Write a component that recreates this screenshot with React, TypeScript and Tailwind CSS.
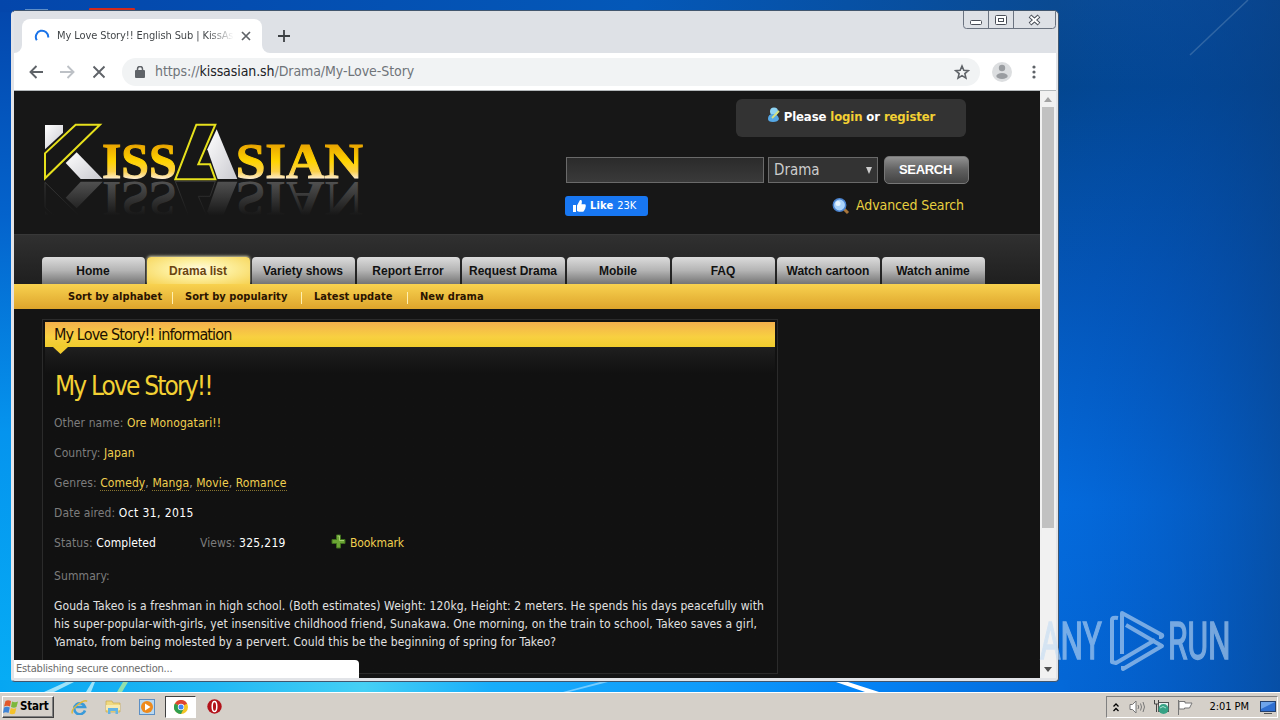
import type { ReactNode } from "react";

const navItems = ["Home", "Drama list", "Variety shows", "Report Error", "Request Drama", "Mobile", "FAQ", "Watch cartoon", "Watch anime"];

const genres = ["Comedy", "Manga", "Movie", "Romance"];

const summary = [
  "Gouda Takeo is a freshman in high school. (Both estimates) Weight: 120kg, Height: 2 meters. He spends his days peacefully with",
  "his super-popular-with-girls, yet insensitive childhood friend, Sunakawa. One morning, on the train to school, Takeo saves a girl,",
  "Yamato, from being molested by a pervert. Could this be the beginning of spring for Takeo?",
];

function Wallpaper() {
  return (
    <svg className="absolute inset-0" width="1280" height="720" viewBox="0 0 1280 720">
      <defs>
        <linearGradient id="left" x1="0" y1="0" x2="0" y2="1">
          <stop offset="0" stopColor="#0446ab" />
          <stop offset="0.3" stopColor="#0463cc" />
          <stop offset="0.6" stopColor="#0594ee" />
          <stop offset="1" stopColor="#06b0f6" />
        </linearGradient>
        <linearGradient id="right" x1="0" y1="0" x2="0" y2="1">
          <stop offset="0" stopColor="#0a4a92" />
          <stop offset="0.12" stopColor="#03468f" />
          <stop offset="0.4" stopColor="#0456b8" />
          <stop offset="0.7" stopColor="#046bdd" />
          <stop offset="1" stopColor="#0466d4" />
        </linearGradient>
        <linearGradient id="shade" x1="0" y1="0" x2="1" y2="0">
          <stop offset="0" stopColor="#0050c0" stopOpacity="0" />
          <stop offset="1" stopColor="#083f86" stopOpacity="0.6" />
        </linearGradient>
        <linearGradient id="floor" x1="0" y1="0" x2="1" y2="0">
          <stop offset="0" stopColor="#06a6f2" />
          <stop offset="0.2" stopColor="#22b8f4" />
          <stop offset="0.34" stopColor="#45d0f5" />
          <stop offset="0.46" stopColor="#18adfb" />
          <stop offset="0.66" stopColor="#109bfb" />
          <stop offset="0.8" stopColor="#0484f6" />
          <stop offset="1" stopColor="#0468d8" />
        </linearGradient>
        <linearGradient id="ceiling" x1="0" y1="0" x2="1" y2="0">
          <stop offset="0" stopColor="#0446ab" />
          <stop offset="0.6" stopColor="#0458b8" />
          <stop offset="1" stopColor="#0a4a92" />
        </linearGradient>
      </defs>
      <rect width="1280" height="720" fill="url(#left)" />
      <rect x="640" width="640" height="720" fill="url(#right)" />
      <rect x="1050" width="230" height="720" fill="url(#shade)" />
      <rect width="1059" height="12" fill="url(#ceiling)" />
      <rect y="680" width="1070" height="14" fill="url(#floor)" />
      <path d="M44 692 66 682h8L54 692zM86 692l6-10h3l-4 10z" fill="#b8ecfa" opacity=".85" />
      <path d="M117 692l6-10h5l-6 10z" fill="#a8e8a0" opacity=".85" />
      <path d="M563 692 600 682h8L569 692z" fill="#8fd6ff" opacity=".8" />
      <path d="M836 682h12L879 692H865z" fill="#fff" />
      <path d="M1190 55 1248 0" stroke="#4b7bb0" strokeWidth="1.5" opacity=".6" />
      <rect x="89" y="8" width="46" height="4" rx="1" fill="#d42a1c" />
      <rect x="25" y="9" width="23" height="2" fill="#5f8fc8" />
    </svg>
  );
}

function Logo() {
  return (
    <svg width="350" height="130" viewBox="0 0 1050 390">
      <defs>
        <linearGradient id="gold" x1="0" y1="0" x2="0" y2="1">
          <stop offset="0.2" stopColor="#e9a400" />
          <stop offset="0.5" stopColor="#ffd400" />
          <stop offset="0.68" stopColor="#fbd04a" />
          <stop offset="0.82" stopColor="#fff0dc" />
        </linearGradient>
        <linearGradient id="silver" x1="0" y1="0" x2="1" y2="1">
          <stop offset="0" stopColor="#ffffff" />
          <stop offset="1" stopColor="#c9c9cf" />
        </linearGradient>
        <linearGradient id="fade" x1="0" y1="0" x2="0" y2="1">
          <stop offset="0" stopColor="#171717" stopOpacity="0.62" />
          <stop offset="0.7" stopColor="#171717" stopOpacity="1" />
        </linearGradient>
        <g id="shapes">
          <path d="M45 75H99V98L45 148Z" />
          <path d="M140 157 218 237H152L107 189Z" />
          <path d="M560 88 622 237H563L532 148Z" />
        </g>
        <g id="letters" fontFamily="Liberation Serif, serif" fontWeight="700" fontSize="153" strokeWidth="3">
          <text x="216" y="235" textLength="224" lengthAdjust="spacingAndGlyphs">ISS</text>
          <text x="617" y="235" textLength="382" lengthAdjust="spacingAndGlyphs">SIAN</text>
        </g>
      </defs>
      <g transform="translate(0 482) scale(1 -1)" fill="#b4b4b4">
        <use href="#shapes" />
        <use href="#letters" />
        <path d="M137 74H210L45 235V160Z M499 74H556L505 193H540L556 238H436Z" fill="#171717" stroke="#777" strokeWidth="3" />
      </g>
      <rect x="0" y="242" width="1050" height="148" fill="url(#fade)" />
      <use href="#shapes" fill="url(#silver)" />
      <use href="#letters" fill="url(#gold)" stroke="url(#gold)" />
      <g fill="#171717" stroke="#e6e01c" strokeWidth="6">
        <path d="M137 74H210L45 235V160Z" />
        <path d="M499 74H556L505 193H540L556 238H436Z" />
      </g>
    </svg>
  );
}

function WindowButtons() {
  return (
    <svg className="absolute right-0 top-0" width="94" height="18" viewBox="0 0 94 18" fill="none" stroke="#6b7380">
      <path d="M1.5 0V14.5Q1.5 17.5 4.500 17.500H90.500Q93.500 17.500 93.500 14.500V0M26.500 0V17M51.500 0V17" />
      <rect x="8.500" y="9.500" width="11" height="4" rx="1" fill="#fff" stroke="#4a4f58" />
      <rect x="33.500" y="4.500" width="11" height="9" rx="1" fill="#fff" stroke="#4a4f58" />
      <rect x="36.500" y="7.500" width="5" height="3" stroke="#4a4f58" />
      <path d="M68 5 77 13M77 5 68 13" stroke="#4a4f58" strokeWidth="4" />
      <path d="M68.500 5.500 76.500 12.500M76.500 5.500 68.500 12.500" stroke="#fff" strokeWidth="2" />
    </svg>
  );
}

function TabStrip() {
  return (
    <div className="relative flex h-[42px] shrink-0 bg-[#dee1e6]">
      <div className="mt-2 flex w-2 items-end bg-white">
        <div className="h-[34px] w-2 rounded-br-lg bg-[#dee1e6]" />
      </div>
      <div className="mt-2 flex h-[34px] w-[240px] items-center rounded-t-lg bg-white pl-[12px]">
        <svg width="16" height="16" viewBox="0 0 16 16" fill="none" stroke="#1a73e8" strokeWidth="2">
          <path d="M2.800 12.200A6.200 6.200 0 1 1 14.200 9.500" />
        </svg>
        <div className="ml-[7px] w-[177px] overflow-hidden whitespace-nowrap bg-linear-to-r from-[#3c4043] from-85% to-transparent to-100% bg-clip-text text-[11px] tracking-[-0.1px] text-transparent">
          My Love Story!! English Sub | KissAsi
        </div>
        <svg className="ml-[7px]" width="10" height="10" viewBox="0 0 10 10" stroke="#5f6368" strokeWidth="1.700">
          <path d="M1 1 9 9M9 1 1 9" />
        </svg>
      </div>
      <div className="mt-2 w-2 bg-white">
        <div className="h-[34px] w-2 rounded-bl-lg bg-[#dee1e6]" />
      </div>
      <svg className="ml-[8px] mt-[19px]" width="12" height="12" viewBox="0 0 12 12" stroke="#3c4043" strokeWidth="1.800">
        <path d="M6 0V12M0 6H12" />
      </svg>
      <WindowButtons />
    </div>
  );
}

function Toolbar() {
  return (
    <div className="flex h-[38px] shrink-0 items-center border-b border-[#b4b8ba] bg-white pl-[15px]">
      <svg width="78" height="14" viewBox="0 0 78 14" fill="none" strokeWidth="1.900">
        <path d="M14 7H1.500M7.500 1 1.500 7 7.500 13" stroke="#5f6368" />
        <path d="M31 7H44.500M38.500 1 44.500 7 38.500 13" stroke="#bdc1c6" />
        <path d="M64.500 1.500 75.500 12.500M75.500 1.500 64.500 12.500" stroke="#5f6368" />
      </svg>
      <div className="ml-[15px] flex h-7 w-[858px] items-center rounded-full bg-[#f1f3f4] pl-[13px] pr-[10px]">
        <svg width="10" height="12" viewBox="0 0 10 12" fill="none">
          <rect y="4" width="10" height="8" rx="1" fill="#5f6368" />
          <path d="M2.500 5V3a2.500 2.500 0 0 1 5 0V5" stroke="#5f6368" strokeWidth="1.500" />
        </svg>
        <span className="ml-[10px] text-[14px] tracking-[-0.08px] text-[#6f7479]">
          https://<span className="text-[#202124]">kissasian.sh</span>/Drama/My-Love-Story
        </span>
        <svg className="ml-auto" width="16" height="16" viewBox="0 0 24 24" fill="none" stroke="#5f6368" strokeWidth="2.400">
          <path d="M12 3l2.700 6.300 6.800.6-5.200 4.500 1.600 6.700L12 17.500l-5.900 3.600 1.600-6.700L2.500 9.900l6.800-.6z" />
        </svg>
      </div>
      <svg className="ml-[12px]" width="20" height="20" viewBox="0 0 20 20">
        <circle cx="10" cy="10" r="10" fill="#dcdee0" />
        <circle cx="10" cy="6" r="3.200" fill="#9a9da1" />
        <ellipse cx="10" cy="14" rx="5.700" ry="3" fill="#9a9da1" />
      </svg>
      <svg className="ml-[20px]" width="4" height="14" viewBox="0 0 4 14" fill="#5f6368">
        <circle cx="2" cy="2" r="1.600" />
        <circle cx="2" cy="7" r="1.600" />
        <circle cx="2" cy="12" r="1.600" />
      </svg>
    </div>
  );
}

function Header() {
  return (
    <div className="flex h-[143px] shrink-0 bg-[#171717]">
      <div className="ml-4 mt-[9px] w-[350px]">
        <Logo />
      </div>
      <div className="ml-[185px] w-[405px] pt-2">
        <div className="ml-[171px] flex h-[38px] w-[230px] justify-center rounded-md bg-[#333] pt-[8px] text-[13px] font-bold leading-[19px] tracking-[-0.12px] text-white">
          <svg className="mr-[4px]" width="13" height="16" viewBox="0 0 13 16">
            <circle cx="7" cy="4.500" r="4" fill="#8fd4f4" />
            <path d="M1 12q0-5 5-5t6 5q-1 3-6 3t-5-3z" fill="#55a8e6" />
            <path d="M5 11 12 4" stroke="#d8e07c" strokeWidth="1.800" />
          </svg>
          <span className="whitespace-pre">Please <a className="text-[#f3d034]">login</a> or <a className="text-[#f3d034]">register</a></span>
        </div>
        <div className="mt-[19px] flex items-start">
          <div className="ml-[1px] mt-px h-[26px] w-[198px] border border-[#6a6a6a] bg-linear-to-b from-[#2b2b2b] to-[#3a3a3a]" />
          <div className="ml-1 mt-px flex h-[26px] w-[110px] items-center border border-[#6a6a6a] bg-[#333] pl-[5px] pt-px text-[15px] text-[#ccc]">
            Drama
            <svg className="ml-auto mr-[5px]" width="6" height="7" viewBox="0 0 6 7" fill="#ccc"><path d="M0 0H6L3 7Z" /></svg>
          </div>
          <div className="ml-[6px] flex h-[28px] w-[85px] items-center justify-center rounded-[5px] border border-[#777] bg-linear-to-b from-[#929292] via-[#606060] via-50% to-[#434343] pr-[2px] font-[Liberation_Sans,sans-serif] text-[13px] font-bold tracking-[-0.3px] text-white">
            SEARCH
          </div>
        </div>
        <div className="mt-[12px] flex items-start">
          <div className="flex h-5 w-[83px] items-center rounded-[3px] bg-[#1877f2] pl-2 text-[11px] text-white">
            <svg width="13" height="12" viewBox="0 0 13 12" fill="#fff">
              <path d="M0 5H3V12H0zM4 5.500 7 0h1.200q1.200 1 .3 4.200H12q1.300.6.600 1.800.4 1-.3 1.700.2 1-.5 1.600 0 1-.7 1.300-.2 1.200-1.500 1.200H6L4 11z" />
            </svg>
            <b className="ml-[4px] tracking-[0.15px]">Like</b>
            <span className="ml-[4px] tracking-[-0.1px]">23K</span>
          </div>
          <svg className="ml-[184px] mt-px" width="18" height="18" viewBox="0 0 18 18">
            <path d="M11 11 16 16" stroke="#a8753a" strokeWidth="3" />
            <circle cx="7.500" cy="8" r="6.200" fill="#a9d3fa" stroke="#4a83cf" strokeWidth="1.500" />
            <circle cx="6" cy="6.500" r="2.500" fill="#e4f3ff" />
          </svg>
          <a className="ml-[6px] whitespace-nowrap text-[14px] leading-[18px] tracking-[-0.1px] text-[#e8d040]">Advanced Search</a>
        </div>
      </div>
    </div>
  );
}

function Nav() {
  return (
    <>
      <div className="flex h-[50px] shrink-0 items-end gap-[2px] border-t border-[#383838] bg-linear-to-b from-[#303030] to-[#1f1f1f] pl-7 font-[Liberation_Sans,sans-serif] text-[12px] font-bold">
        {navItems.map((item) =>
          item === "Drama list" ? (
            <a key={item} className="flex h-[27px] w-[103px] items-center justify-center whitespace-nowrap rounded-t-[4px] bg-radial-[at_50%_45%] from-[#fffbe0] via-[#fdf0a0] via-40% to-[#f6d252] pr-px text-[#6a4410] shadow-[0_-1px_3px_#cfcba8]">{item}</a>
          ) : (
            <a key={item} className="flex h-[27px] w-[103px] items-center justify-center whitespace-nowrap rounded-t-[4px] bg-linear-to-b from-[#dcdcdc] via-[#b4b4b4] via-50% to-[#757575] pr-px text-[#111]">{item}</a>
          )
        )}
      </div>
      <div className="flex h-[25px] shrink-0 items-center bg-linear-to-b from-[#f8d24f] to-[#dda42b] pl-[54px] pt-[2px] text-[11px] font-bold tracking-[0.05px] text-[#2a1400]">
        <a className="w-[104px]">Sort by alphabet</a>
        <i className="mr-[12px] h-3 w-px bg-[#fff0b0]" />
        <a className="w-[116px]">Sort by popularity</a>
        <i className="mr-[12px] h-3 w-px bg-[#fff0b0]" />
        <a className="w-[93px]">Latest update</a>
        <i className="mr-[12px] h-3 w-px bg-[#fff0b0]" />
        <a>New drama</a>
      </div>
    </>
  );
}

function Row({ label, children }: { label: string; children?: ReactNode }) {
  return (
    <div className="h-[30px] whitespace-pre leading-[18px]">
      <span className="text-[#7d7d7d]">{label}</span> {children}
    </div>
  );
}

function Info() {
  return (
    <div className="ml-[28px] mt-[10px] flex h-[355px] w-[736px] shrink-0 flex-col border border-[#2b2b2b] bg-[#111] p-[2px]">
      <div className="h-[25px] w-[730px] bg-linear-to-b from-[#f3b04c] via-[#f8d040] via-60% to-[#f0cc2c] pl-[9px] text-[16px] leading-[25px] tracking-[-0.88px] text-[#1d1000]">
        My Love Story!! information
      </div>
      <div className="flex-1 bg-linear-to-b from-[#1f1f1f] to-[#111] to-[26px] pl-[9px] text-[12px] tracking-[0.1px] text-[#f0d050]">
        <svg className="-ml-px" width="16" height="7" viewBox="0 0 16 7" fill="#f3cc30"><path d="M0 0H15L7.500 7Z" /></svg>
        <h2 className="mt-[14px] ml-[1px] h-[36px] whitespace-nowrap text-[26px] leading-[36px] tracking-[-1.85px] text-[#f3d034]">My Love Story!!</h2>
        <div className="mt-[10px]">
          <Row label="Other name:">Ore Monogatari!!</Row>
          <Row label="Country:">Japan</Row>
          <Row label="Genres:">
            {genres.map((g, i) => (
              <span key={g} className="text-[#999]">
                {i > 0 && ", "}
                <a className="border-b border-dotted border-[#8a7630] text-[#f0d050]">{g}</a>
              </span>
            ))}
          </Row>
          <Row label="Date aired:"><span className="tracking-[0.4px] text-white">Oct 31, 2015</span></Row>
          <div className="flex h-[33px]">
            <div className="w-[146px]"><Row label="Status:"><span className="text-white">Completed</span></Row></div>
            <div className="w-[131px]"><Row label="Views:"><span className="tracking-[0.3px] text-white">325,219</span></Row></div>
            <svg className="mr-[4px]" width="15" height="15" viewBox="0 0 15 15">
              <path d="M5.500 1H9.500V5.500H14V9.500H9.500V14H5.500V9.500H1V5.500H5.500Z" fill="#6ba534" stroke="#3f6e1c" />
              <path d="M6.500 2H8.500V6.500H13" stroke="#a5d070" fill="none" />
            </svg>
            <a className="leading-[18px] tracking-[-0.1px]">Bookmark</a>
          </div>
          <Row label="Summary:" />
          <div className="whitespace-nowrap leading-[18px] text-[#e2e2e2]">
            {summary.map((line) => <p key={line}>{line}</p>)}
          </div>
        </div>
      </div>
    </div>
  );
}

function Scrollbar() {
  return (
    <div className="flex w-4 flex-col items-center bg-[#f1f1f1] pt-[6px] pb-[6px]">
      <svg width="8" height="5" viewBox="0 0 8 5" fill="#a3a3a3"><path d="M0 5 4 0 8 5Z" /></svg>
      <div className="mt-[5px] h-[421px] w-[12px] bg-[#c1c1c1]" />
      <svg className="mt-auto" width="8" height="5" viewBox="0 0 8 5" fill="#505050"><path d="M0 0 4 5 8 0Z" /></svg>
    </div>
  );
}

function Browser() {
  return (
    <div className="relative ml-[11px] mt-[10px] flex h-[672px] w-[1048px] flex-col overflow-hidden rounded-t-[5px] rounded-b-[4px] border border-[#41566e] border-l-[#e4e4e8] bg-[#e2e4e8] pr-[2px] pl-[2px]">
      <TabStrip />
      <Toolbar />
      <div className="flex h-[587px] shrink-0">
        <div className="relative flex w-[1026px] flex-col overflow-hidden bg-[#141414]">
          <Header />
          <Nav />
          <Info />
          <div className="absolute bottom-0 left-0 h-[18px] w-[345px] rounded-tr bg-white pl-[2px] text-[11px] leading-[18px] tracking-[-0.2px] text-[#6b6b6b]">
            Establishing secure connection...
          </div>
        </div>
        <Scrollbar />
      </div>
    </div>
  );
}

function Watermark() {
  return (
    <svg className="absolute left-[1036px] top-[606px]" width="200" height="70" viewBox="0 0 200 70" opacity=".6">
      <g fill="#c4dcf4" stroke="#c4dcf4" strokeWidth="1.500" fontFamily="Roboto, sans-serif" fontSize="51">
        <text transform="translate(4 53) scale(.62 1)">ANY</text>
        <text transform="translate(132 53) scale(.62 1)">RUN</text>
      </g>
      <g fill="none" stroke="#c4dcf4" strokeWidth="4" strokeLinejoin="round">
        <path d="M86 48V7L126 29Q127 31 123 31M90 19 126 40 87 63V60" />
        <path d="M82 12Q76 11 76 14V56L80 57 119 34" />
      </g>
    </svg>
  );
}

function Taskbar() {
  return (
    <div className="relative mt-[10px] flex h-7 items-center border-t border-white bg-[#d5d0c9]">
      <div className="ml-[2px] mt-px flex h-[22px] w-[52px] items-center border border-t-white border-l-white border-r-[#404040] border-b-[#404040] text-[11.500px] font-bold tracking-[-0.2px] text-black shadow-[inset_-1px_-1px_#808080]">
        <svg className="mr-[1px] shrink-0" width="16" height="16" viewBox="0 0 16 16">
          <path d="M2.500 2Q5 .5 8 2L7 7.500Q4 6 1 7.500Z" fill="#e2582a" />
          <path d="M9 2.500Q12 4 15 2.500L13.500 8Q11 9.500 8 8Z" fill="#7cb83c" />
          <path d="M1 8.500Q4 7 6.800 8.500L5.500 14Q3 12.500 0 14Z" fill="#3f84d6" />
          <path d="M7.800 9Q11 10.500 13.300 9L12 14.500Q9 16 6.500 14.500Z" fill="#f4c22a" />
        </svg>
        Start
      </div>
      <svg className="ml-[17px]" width="17" height="16" viewBox="0 0 17 16" fill="none">
        <path d="M14 11.500A5.500 5.500 0 1 1 14 8H5" stroke="#3a9ad9" strokeWidth="2.600" />
        <path d="M1.500 14.500Q-.5 11 7 5.500T16 2.500" stroke="#e0b93c" strokeWidth="1.500" />
      </svg>
      <svg className="ml-[17px]" width="16" height="16" viewBox="0 0 16 16">
        <path d="M1 2H7L8 4H15V13H1Z" fill="#f0d980" stroke="#c9a94a" strokeWidth=".7" />
        <path d="M1 6H15V11H1Z" fill="#f8ebb0" />
        <path d="M3 15V9H13V15H10.500V12H5.500V15Z" fill="#64b4e4" />
      </svg>
      <svg className="ml-[18px]" width="16" height="16" viewBox="0 0 16 16">
        <rect x=".5" y=".5" width="15" height="15" fill="#b9d8f0" stroke="#5c8fc4" />
        <circle cx="8" cy="8" r="6" fill="#ee8a1c" />
        <path d="M6 4.500 11.500 8 6 11.500Z" fill="#fff" />
      </svg>
      <div className="ml-[10px] flex h-[22px] w-[31px] items-center justify-center border border-t-[#404040] border-l-[#404040] border-r-white border-b-white bg-white">
        <svg width="14" height="14" viewBox="0 0 14 14">
          <circle cx="7" cy="7" r="7" fill="#f4c525" />
          <path d="M7 7 .9 3.500A7 7 0 0 1 13.100 3.500Z" fill="#dd4433" />
          <path d="M7 7 .9 3.500A7 7 0 0 0 7 14L9.500 9Z" fill="#2f9e4f" />
          <circle cx="7" cy="7" r="3.200" fill="#fff" />
          <circle cx="7" cy="7" r="2.500" fill="#4285f4" />
        </svg>
      </div>
      <svg className="ml-[11px]" width="15" height="15" viewBox="0 0 15 15">
        <circle cx="7.500" cy="7.500" r="7.200" fill="#b3121a" />
        <ellipse cx="7.500" cy="7.500" rx="2.300" ry="5" fill="none" stroke="#fff" strokeWidth="1.500" />
      </svg>
      <div className="ml-auto mr-[2px] mt-px flex h-[22px] w-[172px] items-center border border-t-[#808080] border-l-[#808080] border-r-white border-b-white pl-[6px] text-[11px] text-black">
        <svg width="6" height="9" viewBox="0 0 6 9" fill="none" stroke="#000" strokeWidth="1.300"><path d="M.5 3.500 3 1 5.500 3.500M.5 8 3 5.500 5.500 8" /></svg>
        <svg className="ml-[10px]" width="17" height="14" viewBox="0 0 17 14" fill="none" stroke="#777">
          <path d="M1 4.500H3.500L7 1V13L3.500 9.500H1Z" fill="#fff" />
          <path d="M9 5Q10.500 7 9 9M11.500 3.500Q13.500 7 11.500 10.500M14 2Q17 7 14 12" />
        </svg>
        <svg className="ml-[7px]" width="17" height="16" viewBox="0 0 17 16">
          <rect x="5.500" y="3.500" width="10" height="9" fill="#e8f2f0" stroke="#555" />
          <path d="M1.500 1V5H5.500V1M3.500 5V13" stroke="#444" fill="none" />
          <circle cx="10.500" cy="10" r="5" fill="#36a285" />
          <path d="M7 9Q10 6 13 9" stroke="#a9e2d0" fill="none" />
        </svg>
        <svg className="ml-[7px]" width="16" height="15" viewBox="0 0 16 15" fill="#fff" stroke="#777"><path d="M1.500 0V15M2 1.500H8V3H15L12.500 8H7.500V9H2Z" /></svg>
        <span className="ml-auto whitespace-nowrap tracking-[-0.05px]">2:01 PM</span>
        <svg className="ml-[11px] mr-[1px]" width="16" height="13" viewBox="0 0 16 13">
          <rect x=".5" y=".5" width="15" height="10" fill="#2f6fd0" stroke="#24406c" />
          <path d="M1 1H15L1 8Z" fill="#6ea4ea" />
          <path d="M4 12.500H12" stroke="#555" />
        </svg>
      </div>
    </div>
  );
}

export default function App() {
  return (
    <div className="relative flex h-[720px] w-[1280px] flex-col overflow-hidden font-['DejaVu_Sans_Condensed','DejaVu_Sans',sans-serif]">
      <Wallpaper />
      <Browser />
      <Taskbar />
      <Watermark />
    </div>
  );
}
